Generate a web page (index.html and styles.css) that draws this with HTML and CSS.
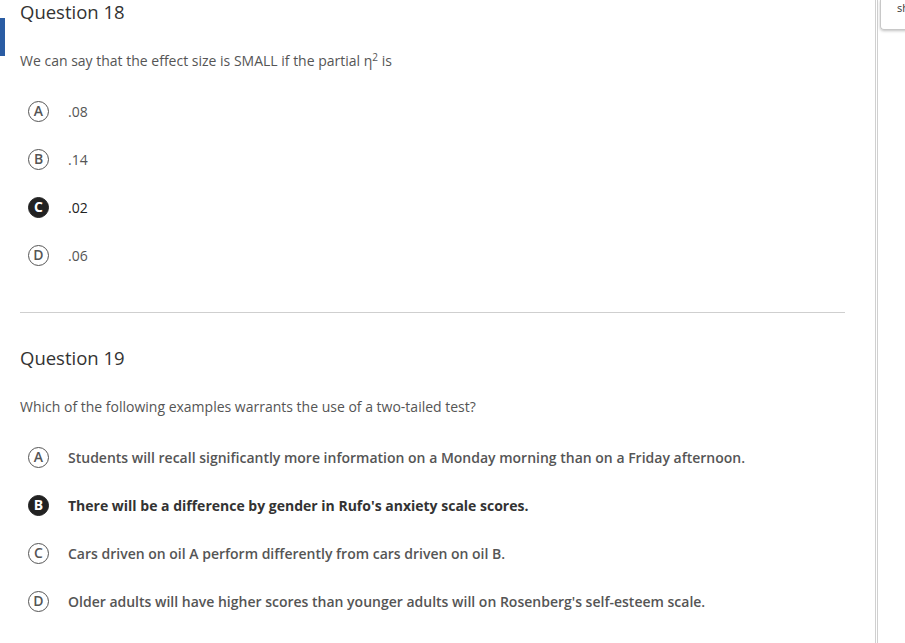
FILE: index.html
```html
<!DOCTYPE html>
<html lang="en">
<head>
<meta charset="utf-8">
<title>Quiz</title>
<link rel="stylesheet" href="styles.css">
</head>
<body>
<div class="page">
  <main class="content">
    <section class="question current">
      <h2 class="q-title">Question 18</h2>
      <p class="q-text">We can say that the effect size is SMALL if the partial η<sup>2</sup> is</p>
      <ul class="options">
        <li class="option"><span class="bubble">A</span><span class="opt-text">.08</span></li>
        <li class="option"><span class="bubble">B</span><span class="opt-text">.14</span></li>
        <li class="option selected"><span class="bubble">C</span><span class="opt-text">.02</span></li>
        <li class="option"><span class="bubble">D</span><span class="opt-text">.06</span></li>
      </ul>
    </section>
    <hr class="divider">
    <section class="question">
      <h2 class="q-title">Question 19</h2>
      <p class="q-text">Which of the following examples warrants the use of a two-tailed test?</p>
      <ul class="options long">
        <li class="option"><span class="bubble">A</span><span class="opt-text">Students will recall significantly more information on a Monday morning than on a Friday afternoon.</span></li>
        <li class="option selected"><span class="bubble">B</span><span class="opt-text">There will be a difference by gender in Rufo's anxiety scale scores.</span></li>
        <li class="option"><span class="bubble">C</span><span class="opt-text">Cars driven on oil A perform differently from cars driven on oil B.</span></li>
        <li class="option"><span class="bubble">D</span><span class="opt-text">Older adults will have higher scores than younger adults will on Rosenberg's self-esteem scale.</span></li>
      </ul>
    </section>
  </main>
  <aside class="side">
    <div class="side-inner">
      <div class="side-card">sh</div>
    </div>
  </aside>
</div>
</body>
</html>
```
FILE: styles.css
```css
html, body {
  margin: 0;
  padding: 0;
  background: #fff;
}
body {
  font-family: "Open Sans", "Liberation Sans", sans-serif;
  color: #555;
  overflow: hidden;
}
.page {
  display: flex;
  height: 643px;
}
.content {
  width: 825px;
  padding-left: 20px;
  flex: none;
}
.question {
  position: relative;
}
.question.current::before {
  content: "";
  position: absolute;
  left: -20px;
  top: 18px;
  width: 5px;
  height: 38px;
  background: #2a5ca3;
}
.q-title {
  margin: 0;
  font-size: 18.5px;
  line-height: 24px;
  font-weight: 400;
  color: #333;
}
.q-text {
  margin: 27px 0 0;
  font-size: 14px;
  line-height: 20px;
  color: #555;
}
.q-text sup {
  font-size: 10px;
  line-height: 0;
  vertical-align: 5px;
}
.options {
  list-style: none;
  margin: 28px 0 0 8px;
  padding: 0;
  display: flex;
  flex-direction: column;
  gap: 24px;
}
.option {
  display: flex;
  align-items: center;
  height: 24px;
  gap: 19px;
  font-size: 14px;
  color: #555;
}
.long .option {
  font-weight: 600;
}
.bubble {
  box-sizing: border-box;
  width: 21px;
  height: 21px;
  min-width: 21px;
  border: 1.6px solid #555;
  border-radius: 50%;
  display: flex;
  align-items: center;
  justify-content: center;
  font-size: 14px;
  line-height: 1;
  font-weight: 600;
  color: #555;
  flex: none;
}
.option.selected .bubble {
  background: #222;
  border-color: #222;
  color: #fff;
  font-weight: 700;
}
.option.selected .opt-text {
  color: #222;
}
.long .option.selected .opt-text {
  font-weight: 700;
  color: #333;
}
.divider {
  border: 0;
  border-top: 1px solid #cfcfcf;
  margin: 45px 0 33px;
}
.side {
  margin-left: 30px;
  border-left: 1px solid #d0d0d0;
  padding-left: 1px;
  flex: 1;
}
.side-inner {
  border-left: 1px solid #d0d0d0;
  height: 100%;
  padding-left: 2px;
}
.side-card {
  height: 28px;
  border: 1px solid #c8c8c8;
  border-top: 0;
  border-right: 0;
  border-radius: 0 0 0 4px;
  box-shadow: 0 1px 3px rgba(0,0,0,0.25);
  font-size: 11px;
  line-height: 14px;
  color: #333;
  padding-left: 16px;
  padding-top: 1px;
  overflow: hidden;
}
```
